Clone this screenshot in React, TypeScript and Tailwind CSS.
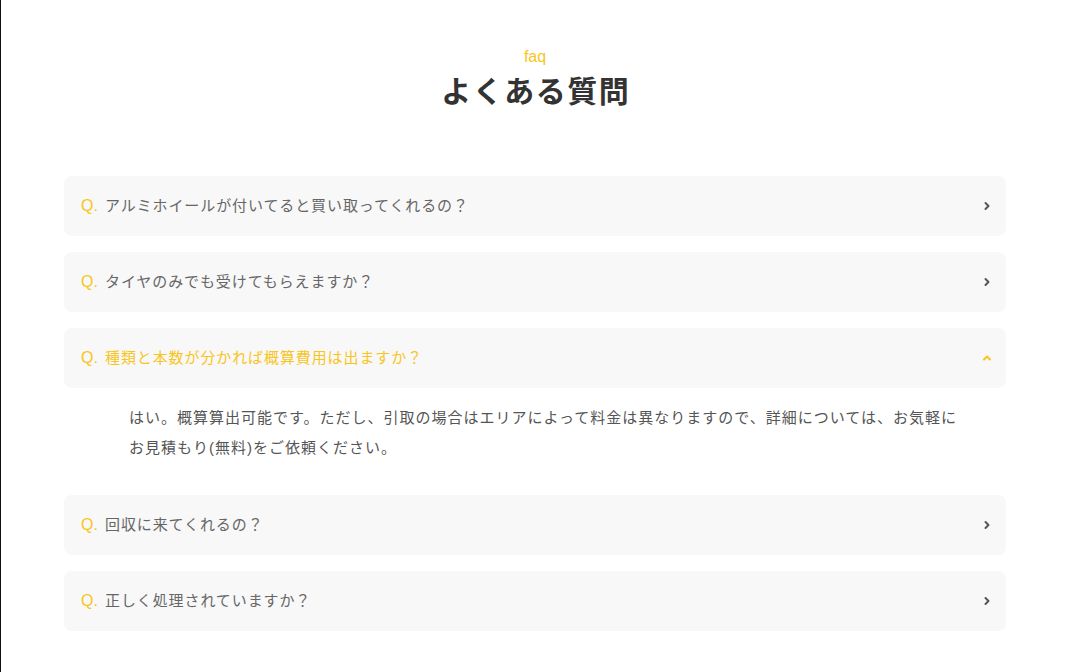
import { ChevronRight, ChevronUp } from "lucide-react";

const font = { fontFamily: '"Liberation Sans", "Noto Sans CJK JP", sans-serif' };

const faqs = [
  { q: "アルミホイールが付いてると買い取ってくれるの？" },
  { q: "タイヤのみでも受けてもらえますか？" },
  {
    q: "種類と本数が分かれば概算費用は出ますか？",
    open: true,
    a: [
      "はい。概算算出可能です。ただし、引取の場合はエリアによって料金は異なりますので、詳細については、お気軽に",
      "お見積もり(無料)をご依頼ください。",
    ],
  },
  { q: "回収に来てくれるの？" },
  { q: "正しく処理されていますか？" },
];

export default function App() {
  return (
    <div className="min-h-[672px] bg-white border-l border-[#111] pl-[2px]" style={font}>
      <div className="mx-auto w-[942px] pt-[45px] pb-10">
        <p className="text-center text-[16px] leading-[24px] text-[#f8c51c]">faq</p>
        <h2 className="text-center text-[30px] leading-[45px] font-bold text-[#333] tracking-[0.05em] pl-[1.5px]">
          よくある質問
        </h2>

        <div className="mt-[62px] flex flex-col gap-4">
          {faqs.map((f) => (
            <div key={f.q}>
              <button
                type="button"
                className="flex h-[60px] w-full items-center rounded-lg bg-[#f8f8f8] pl-[17px] pr-[13px] text-left"
              >
                <span className="text-[16px] text-[#f8c51c] w-[24px]">Q.</span>
                <span
                  className={
                    "flex-1 text-[15px] tracking-[0.06em] " +
                    (f.open ? "text-[#f8c51c]" : "text-[#666]")
                  }
                >
                  {f.q}
                </span>
                {f.open ? (
                  <ChevronUp className="h-3 w-3 text-[#f8c51c]" strokeWidth={4} />
                ) : (
                  <ChevronRight className="h-3 w-3 text-[#555]" strokeWidth={4} />
                )}
              </button>
              {f.open && f.a && (
                <div className="pl-[65px] pt-[15px] pb-[16px] text-[15px] leading-[30px] tracking-[1px] text-[#555]">
                  {f.a.map((line) => (
                    <p key={line}>{line}</p>
                  ))}
                </div>
              )}
            </div>
          ))}
        </div>
      </div>
    </div>
  );
}
